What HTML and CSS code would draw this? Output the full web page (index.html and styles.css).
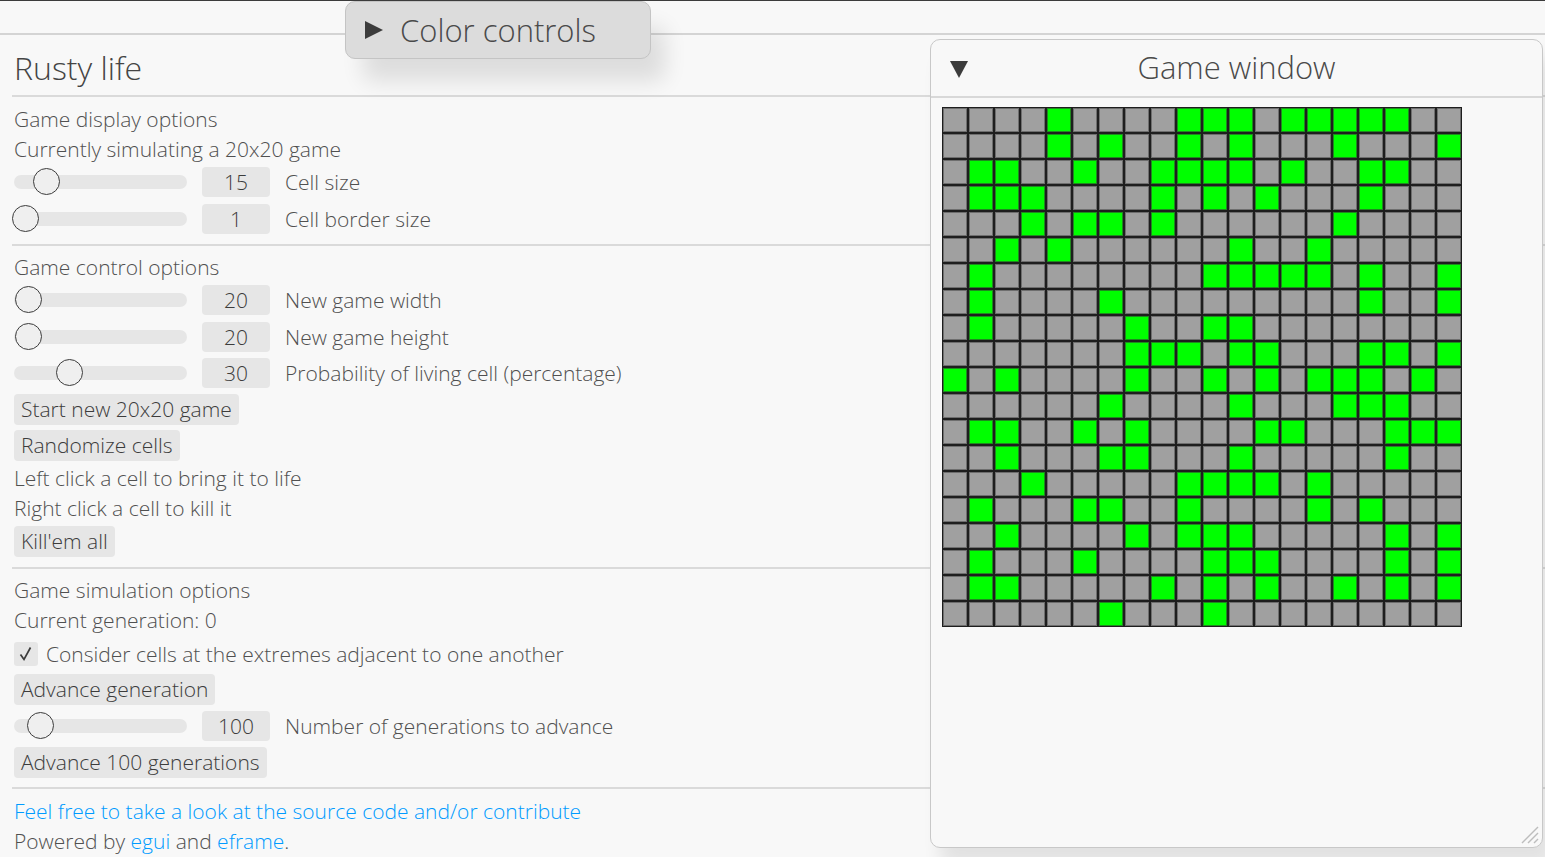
FILE: index.html
```html
<!DOCTYPE html>
<html>
<head>
<meta charset="utf-8">
<title>Rusty life</title>
<link rel="stylesheet" href="styles.css">
</head>
<body>
<div class="app">
  <header class="topbar"></header>

  <main class="panel">
    <h1 class="heading">Rusty life</h1>
    <div class="sep"></div>

    <div class="label">Game display options</div>
    <div class="label">Currently simulating a 20x20 game</div>
    <div class="row">
      <div class="slider"><div class="track"></div><div class="knob" style="left:33px"></div></div>
      <div class="value">15</div><div class="row-label">Cell size</div>
    </div>
    <div class="row">
      <div class="slider"><div class="track"></div><div class="knob" style="left:12px"></div></div>
      <div class="value">1</div><div class="row-label">Cell border size</div>
    </div>
    <div class="sep"></div>

    <div class="label">Game control options</div>
    <div class="row">
      <div class="slider"><div class="track"></div><div class="knob" style="left:15px"></div></div>
      <div class="value">20</div><div class="row-label">New game width</div>
    </div>
    <div class="row">
      <div class="slider"><div class="track"></div><div class="knob" style="left:15px"></div></div>
      <div class="value">20</div><div class="row-label">New game height</div>
    </div>
    <div class="row">
      <div class="slider"><div class="track"></div><div class="knob" style="left:56px"></div></div>
      <div class="value">30</div><div class="row-label">Probability of living cell (percentage)</div>
    </div>
    <button class="btn">Start new 20x20 game</button>
    <button class="btn">Randomize cells</button>
    <div class="label">Left click a cell to bring it to life</div>
    <div class="label">Right click a cell to kill it</div>
    <button class="btn">Kill'em all</button>
    <div class="sep"></div>

    <div class="label">Game simulation options</div>
    <div class="label">Current generation: 0</div>
    <label class="check-row">
      <span class="checkbox"><svg width="24" height="24" viewBox="0 0 24 24"><path d="M6.5 12.5 L10 17.5 L16.5 5.5" fill="none" stroke="#3c3c3c" stroke-width="1.7"/></svg></span>
      <span class="check-label">Consider cells at the extremes adjacent to one another</span>
    </label>
    <button class="btn">Advance generation</button>
    <div class="row">
      <div class="slider"><div class="track"></div><div class="knob" style="left:27px"></div></div>
      <div class="value">100</div><div class="row-label">Number of generations to advance</div>
    </div>
    <button class="btn">Advance 100 generations</button>
    <div class="sep"></div>

    <div class="label"><a class="link" href="#">Feel free to take a look at the source code and/or contribute</a></div>
    <div class="label">Powered by <a class="link" href="#">egui</a> and <a class="link" href="#">eframe</a>.</div>
  </main>

  <div class="popup">
    <svg class="tri-right" width="18" height="18" viewBox="0 0 18 18"><polygon points="0,0 18,9 0,18" fill="#3c3c3c"/></svg>
    <span class="popup-title">Color controls</span>
  </div>

  <section class="window">
    <div class="window-title">
      <svg class="tri-down" width="18" height="18" viewBox="0 0 18 18"><polygon points="0,0 18,0 9,17" fill="#3c3c3c"/></svg>
      <span class="window-title-text">Game window</span>
    </div>
    <div class="window-body">
      <div class="grid" id="grid"></div>
    </div>
    <svg class="grip" width="20" height="20" viewBox="0 0 20 20">
      <line x1="19" y1="3" x2="3" y2="19" stroke="#bdbdbd" stroke-width="1.4"/>
      <line x1="19" y1="9" x2="9" y2="19" stroke="#bdbdbd" stroke-width="1.4"/>
      <line x1="19" y1="15" x2="15" y2="19" stroke="#bdbdbd" stroke-width="1.4"/>
    </svg>
  </section>
</div>
<script src="app.js"></script>
</body>
</html>
```

FILE: styles.css
```css
html, body {
  margin: 0;
  padding: 0;
}
body {
  background: #f8f8f8;
  width: 1545px;
  height: 857px;
  overflow: hidden;
  font-family: "Open Sans", "Noto Sans", sans-serif;
  font-weight: 300;
  font-size: 21px;
  color: #505050;
}
.app {
  position: relative;
  width: 1545px;
  height: 857px;
}
.topbar {
  height: 32px;
  border-top: 1px solid #3c3c3c;
  border-bottom: 2px solid #d4d4d4;
  background: #f8f8f8;
}
.panel {
  display: flex;
  flex-direction: column;
  gap: 5.25px;
  padding: 15px 0 0 14px;
}
.heading {
  margin: 0;
  height: 36px;
  line-height: 36px;
  font-size: 32px;
  font-weight: 300;
  color: #444;
}
.sep {
  height: 10.3px;
  margin-left: -2px;
  display: flex;
  align-items: center;
}
.sep::before {
  content: "";
  flex: 1;
  height: 2px;
  background: #dadada;
}
.label {
  height: 24.8px;
  line-height: 24.8px;
  white-space: nowrap;
}
.link {
  color: #009bff;
  text-decoration: none;
}
.row {
  display: flex;
  align-items: center;
  height: 31px;
}
.slider {
  position: relative;
  width: 173px;
  height: 31px;
  display: flex;
  align-items: center;
}
.track {
  width: 100%;
  height: 14px;
  border-radius: 7px;
  background: #e6e6e6;
}
.knob {
  position: absolute;
  top: 50%;
  width: 25px;
  height: 25px;
  margin-left: -14px;
  margin-top: -14px;
  border: 1.7px solid #3c3c3c;
  border-radius: 50%;
  background: #efefef;
}
.value {
  margin-left: 15px;
  width: 68px;
  height: 30px;
  border-radius: 4px;
  background: #e6e6e6;
  display: flex;
  align-items: center;
  justify-content: center;
  color: #3c3c3c;
}
.row-label {
  margin-left: 15px;
  white-space: nowrap;
}
.btn {
  align-self: flex-start;
  height: 31px;
  padding: 0 7px;
  border: none;
  border-radius: 4px;
  background: #e6e6e6;
  font: inherit;
  color: #3c3c3c;
  line-height: 31px;
}
.check-row {
  display: flex;
  align-items: center;
  height: 31px;
}
.checkbox {
  width: 24px;
  height: 24px;
  border-radius: 3px;
  background: #e6e6e6;
  display: flex;
}
.check-label {
  margin-left: 8px;
  white-space: nowrap;
}

/* Collapsed "Color controls" window */
.popup {
  position: absolute;
  left: 345px;
  top: 1px;
  width: 304px;
  height: 56px;
  border: 1px solid #c4c4c4;
  border-radius: 10px;
  background: #dcdcdc;
  box-shadow: 16px 24px 22px -2px rgba(0, 0, 0, 0.11);
  display: flex;
  align-items: center;
}
.tri-right {
  margin-left: 19px;
}
.popup-title {
  margin-left: 17px;
  font-size: 31px;
  color: #4a4a4a;
}

/* Game window */
.window {
  position: absolute;
  left: 930px;
  top: 39px;
  width: 611px;
  height: 807px;
  border: 1px solid #c8c8c8;
  border-radius: 10px;
  background: #f8f8f8;
  box-shadow: 10px 18px 18px rgba(0, 0, 0, 0.09);
}
.window-title {
  position: relative;
  height: 56px;
  border-bottom: 2px solid #d8d8d8;
  display: flex;
  align-items: center;
  justify-content: center;
}
.tri-down {
  position: absolute;
  left: 19px;
  top: 21px;
}
.window-title-text {
  font-size: 31px;
  color: #4a4a4a;
  margin-top: -2px;
}
.window-body {
  padding: 9px 0 0 11px;
}
.grid {
  display: grid;
  grid-template-columns: repeat(20, 24px);
  grid-auto-rows: 24px;
  gap: 2px;
  padding: 1px;
  width: max-content;
  background: #1e1e1e;
}
.cell {
  background: #a0a0a0;
  box-shadow: inset 0 0 0 1px #6e6e6e;
}
.cell.alive {
  background: #00ff00;
  box-shadow: inset 0 0 0 1px #1f8a1f;
}
.grip {
  position: absolute;
  right: 3px;
  bottom: 3px;
}
```

FILE: app.js
```js
(function () {
  var alive = [
    [4, 9, 10, 11, 13, 14, 15, 16, 17],
    [4, 6, 9, 11, 15, 19],
    [1, 2, 5, 8, 9, 10, 11, 13, 16, 17],
    [1, 2, 3, 8, 10, 12, 16],
    [3, 5, 6, 8, 15],
    [2, 4, 11, 14],
    [1, 10, 11, 12, 13, 14, 16, 19],
    [1, 6, 16, 19],
    [1, 7, 10, 11],
    [7, 8, 9, 11, 12, 16, 17, 19],
    [0, 2, 7, 10, 12, 14, 15, 16, 18],
    [6, 11, 15, 16, 17],
    [1, 2, 5, 7, 12, 13, 17, 18, 19],
    [2, 6, 7, 11, 17],
    [3, 9, 10, 11, 12, 14],
    [1, 5, 6, 9, 14, 16],
    [2, 7, 9, 10, 11, 17, 19],
    [1, 5, 10, 11, 12, 17, 19],
    [1, 2, 8, 10, 12, 15, 17, 19],
    [6, 10]
  ];
  var grid = document.getElementById('grid');
  for (var r = 0; r < 20; r++) {
    for (var c = 0; c < 20; c++) {
      var d = document.createElement('div');
      d.className = alive[r].indexOf(c) >= 0 ? 'cell alive' : 'cell';
      grid.appendChild(d);
    }
  }
})();
```
